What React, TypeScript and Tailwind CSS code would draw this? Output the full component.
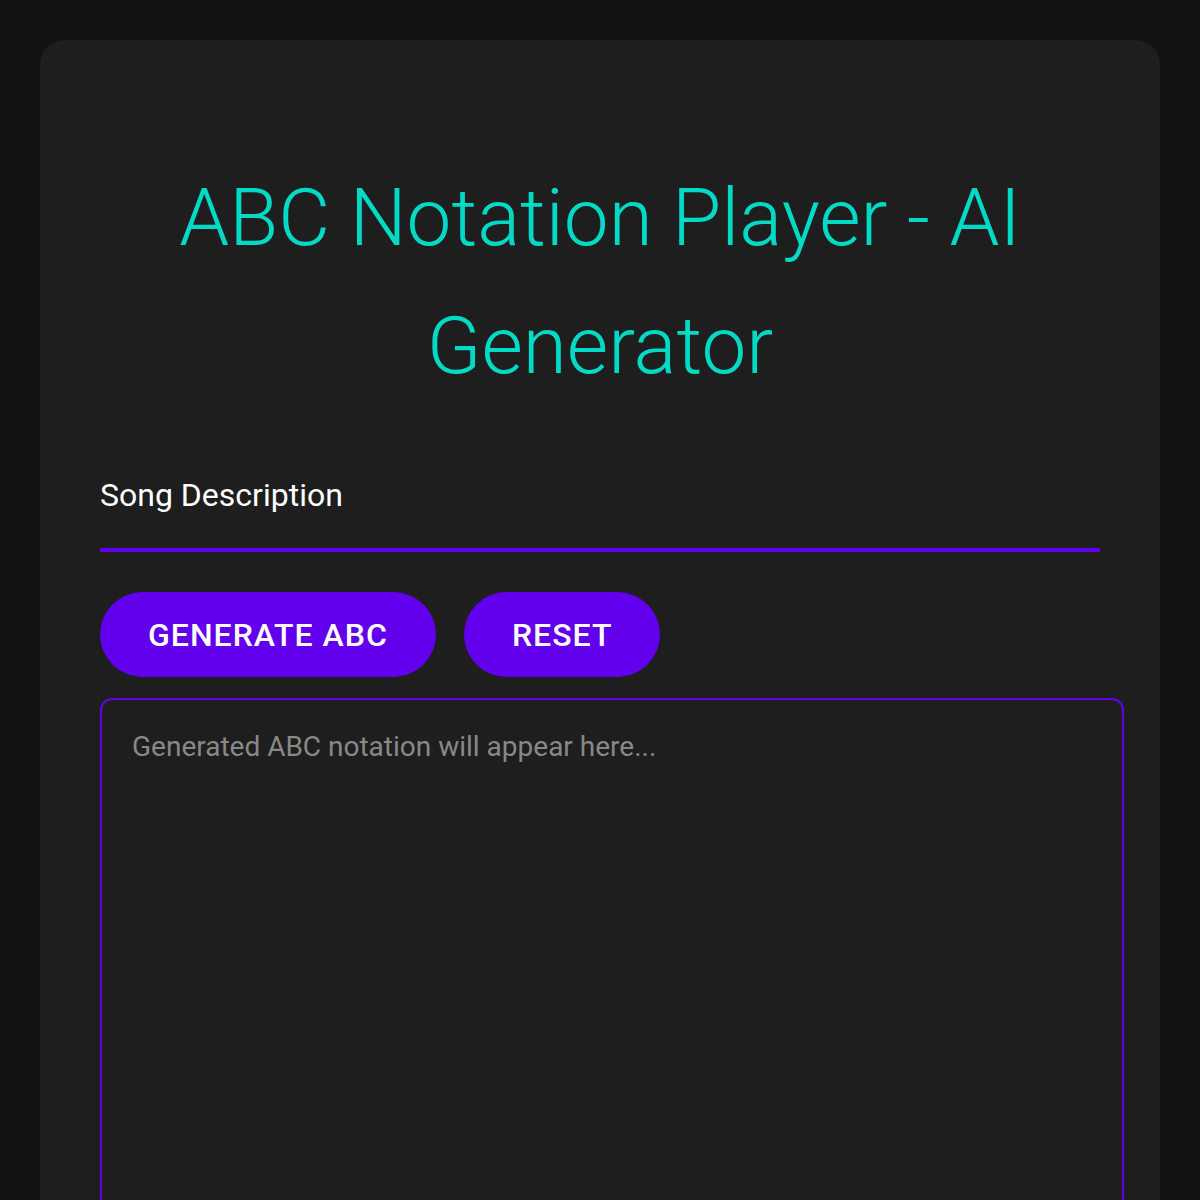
import React, { useState } from "react";

const App: React.FC = () => {
  const [description, setDescription] = useState("");
  const [abc, setAbc] = useState("");

  const handleReset = () => {
    setDescription("");
    setAbc("");
  };

  return (
    <div
      className="min-h-[1200px] bg-[#121212] p-10"
      style={{ fontFamily: "Roboto, 'Liberation Sans', sans-serif" }}
    >
      <div className="min-h-[1300px] rounded-[24px] bg-[#1e1e1e] px-[60px] pt-[60px]">
        <h1 className="mt-[54px] mb-[54px] text-center text-[80px] leading-[128px] font-light text-[#03dac6]">
          ABC Notation Player - AI Generator
        </h1>

        {/* campo de descrição */}
        <input
          type="text"
          value={description}
          onChange={(e) => setDescription(e.target.value)}
          placeholder="Song Description"
          className="block h-[88px] w-full border-b-[4px] border-[#6200ee] bg-transparent pb-[23px] text-[32px] text-white outline-none placeholder:text-white"
        />

        <div className="mt-[40px] flex gap-[28px]">
          <button className="h-[85px] rounded-full bg-[#6200ee] px-[48px] text-[32px] font-medium tracking-[1px] text-white uppercase">
            Generate ABC
          </button>
          <button
            className="h-[85px] rounded-full bg-[#6200ee] px-[48px] text-[32px] font-medium tracking-[1px] text-white uppercase"
            onClick={handleReset}
          >
            Reset
          </button>
        </div>

        <textarea
          value={abc}
          onChange={(e) => setAbc(e.target.value)}
          placeholder="Generated ABC notation will appear here..."
          className="mt-[21px] block h-[600px] w-[calc(100%+24px)] resize-none rounded-[12px] border-2 border-[#6200ee] bg-transparent px-[30px] pt-[26px] pb-[30px] text-[28px] text-white outline-none placeholder:text-[#888888]"
        />
      </div>
    </div>
  );
};

export default App;
